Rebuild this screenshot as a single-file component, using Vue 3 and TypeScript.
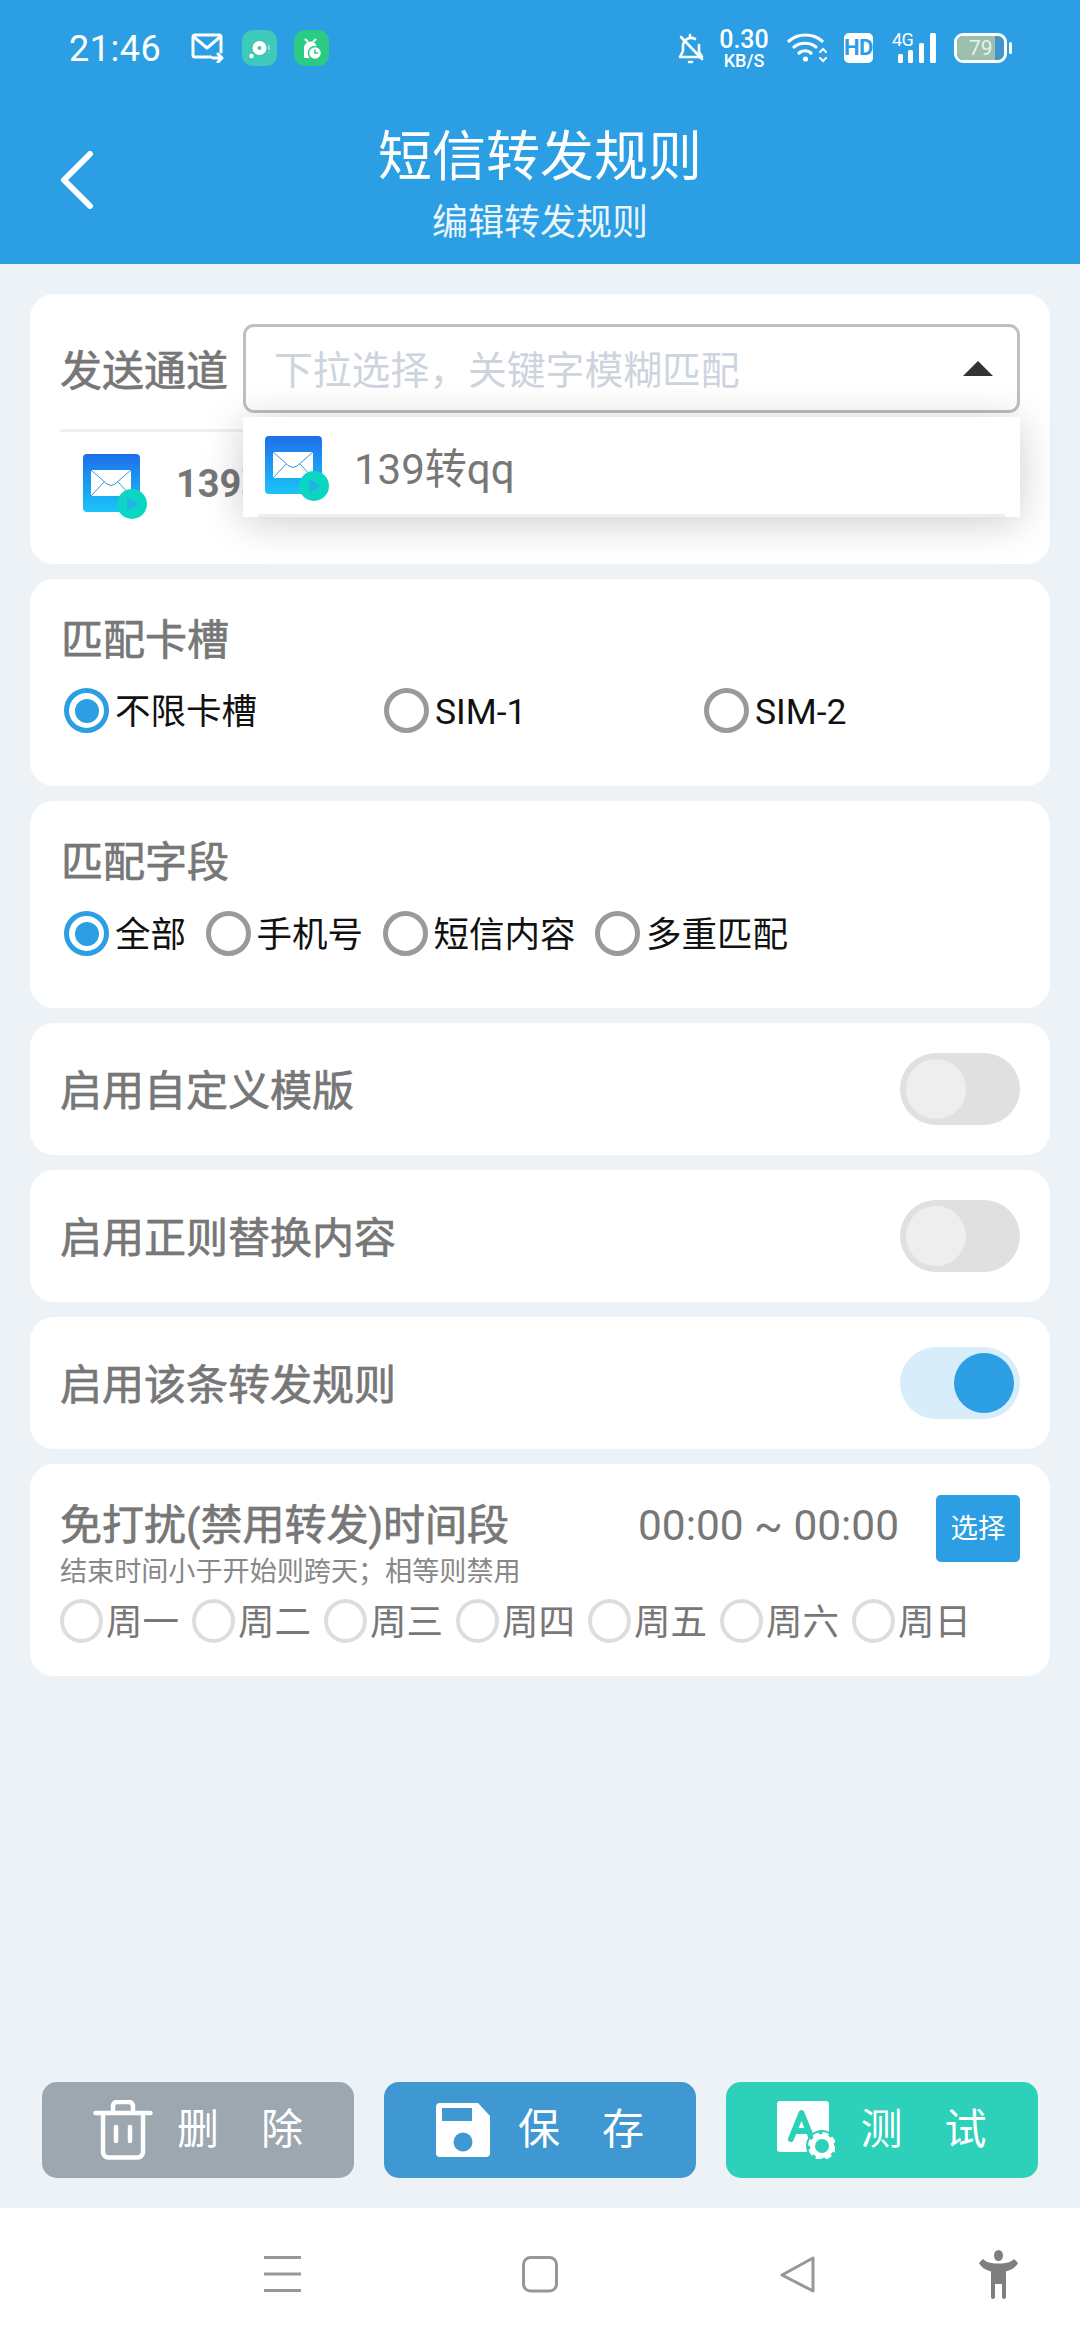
<script setup lang="ts">
const days: string[] = ['周一', '周二', '周三', '周四', '周五', '周六', '周日']
const sims: { label: string; on: boolean }[] = [
  { label: '不限卡槽', on: true },
  { label: 'SIM-1', on: false },
  { label: 'SIM-2', on: false },
]
const fields: { label: string; on: boolean }[] = [
  { label: '全部', on: true },
  { label: '手机号', on: false },
  { label: '短信内容', on: false },
  { label: '多重匹配', on: false },
]
</script>

<template>
  <div class="page">
    <header class="header">
      <div class="status">
        <div class="status-left">
          <span class="time">21:46</span>
          <svg class="ic-mail" width="34" height="30" viewBox="0 0 34 30" fill="none" stroke="#fff" stroke-width="3" stroke-linecap="round" stroke-linejoin="round">
            <path d="M30 19V4a2 2 0 0 0-2-2H4a2 2 0 0 0-2 2v18a2 2 0 0 0 2 2h16" />
            <path d="M3 4l13 11L29 4" />
            <path d="M22 25h9M27 21l4 4-4 4" />
          </svg>
          <span class="app-badge teal">
            <svg width="35" height="36" viewBox="0 0 35 36">
              <circle cx="17.500" cy="18" r="7" fill="#fff" />
              <circle cx="17.500" cy="18" r="2" fill="#3FC9B8" />
              <circle cx="9.500" cy="26" r="2.200" fill="#fff" />
              <path d="M27 15v5M27 22v1" stroke="#fff" stroke-width="1.200" opacity=".7" />
            </svg>
          </span>
          <span class="app-badge green">
            <svg width="35" height="36" viewBox="0 0 35 36">
              <path d="M11 9l3 3M22 9l-3 3" stroke="#fff" stroke-width="2" />
              <path d="M10 28V18a6.500 6.500 0 0 1 13 0v10z" fill="#fff" />
              <circle cx="21" cy="23" r="6.500" fill="#fff" stroke="#2BCB85" stroke-width="1.500" />
              <path d="M21 19.500V23h3" fill="none" stroke="#2BCB85" stroke-width="1.500" />
            </svg>
          </span>
        </div>
        <div class="status-right">
          <svg width="26" height="32" viewBox="0 0 26 32" fill="none" stroke="#fff" stroke-width="2.600" stroke-linejoin="round" stroke-linecap="round">
            <path d="M5 18V14a8 8 0 0 1 12-7M21 13v7l3 5H2l3-6" />
            <path d="M3 5l21 22" />
            <path d="M12 3v1M11 30h3" />
          </svg>
          <div class="speed"><span class="speed-num">0.30</span><span class="speed-unit">KB/S</span></div>
          <svg width="41" height="32" viewBox="0 0 41 32" fill="none" stroke="#fff" stroke-width="3.200" stroke-linecap="round">
            <path d="M2 9C11 1 26 1 35 9" />
            <path d="M7 15c6-5 16-5 22 0" />
            <path d="M12 21c3-3 9-3 12 0" />
            <circle cx="18.500" cy="27" r="2.600" fill="#fff" stroke="none" />
            <path d="M33 20l3-3 3 3M33 26l3 3 3-3" stroke-width="2" />
          </svg>
          <span class="hd">HD</span>
          <div class="sig">
            <span class="sig-4g">4G</span>
            <svg width="44" height="30" viewBox="0 0 44 30" fill="#fff">
              <rect x="6" y="21" width="5" height="9" rx="1.500" />
              <rect x="16" y="17" width="5" height="13" rx="1.500" />
              <rect x="27" y="10" width="5" height="20" rx="1.500" />
              <rect x="38" y="0" width="6" height="30" rx="1.500" />
            </svg>
          </div>
          <div class="battery">
            <div class="bat-body"><div class="bat-fill"></div><span class="bat-num">79</span></div>
            <span class="bat-tip"></span>
          </div>
        </div>
      </div>
      <div class="titlebar">
        <svg class="back" width="34" height="58" viewBox="0 0 34 58" fill="none" stroke="#fff" stroke-width="6" stroke-linecap="round" stroke-linejoin="round">
          <path d="M30 3L4 29l26 26" />
        </svg>
        <div class="titles">
          <div class="title">短信转发规则</div>
          <div class="subtitle">编辑转发规则</div>
        </div>
      </div>
    </header>

    <main class="content">
      <section class="card channel">
        <div class="channel-row">
          <span class="label">发送通道</span>
          <div class="select">
            <span class="placeholder">下拉选择，关键字模糊匹配</span>
            <span class="caret"></span>
          </div>
        </div>
        <div class="chosen">
          <svg class="mail-icon" width="64" height="66" viewBox="0 0 64 66">
            <defs>
              <linearGradient id="mg1" x1="0" y1="0" x2="0" y2="1">
                <stop offset="0" stop-color="#1E6FEA" />
                <stop offset="1" stop-color="#1CC4F8" />
              </linearGradient>
            </defs>
            <rect x="0" y="0" width="57" height="58" rx="4" fill="url(#mg1)" />
            <rect x="8" y="16" width="40" height="26" rx="1" fill="#fff" />
            <path d="M8 16l16 14q4 3 8 0l16-14M8 42l13-14M48 42L35 28" fill="none" stroke="#3596E0" stroke-width="1" />
            <circle cx="49" cy="50" r="15" fill="#0BD6C3" />
            <path d="M44 43l12 7-12 7z" fill="#1FB4E4" />
          </svg>
          <span class="chosen-name">139转qq</span>
        </div>
        <div class="dropdown">
          <div class="option">
            <svg class="mail-icon" width="64" height="66" viewBox="0 0 64 66">
              <rect x="0" y="0" width="57" height="58" rx="4" fill="url(#mg1)" />
              <rect x="8" y="16" width="40" height="26" rx="1" fill="#fff" />
              <path d="M8 16l16 14q4 3 8 0l16-14M8 42l13-14M48 42L35 28" fill="none" stroke="#3596E0" stroke-width="1" />
              <circle cx="49" cy="50" r="15" fill="#0BD6C3" />
              <path d="M44 43l12 7-12 7z" fill="#1FB4E4" />
            </svg>
            <span class="option-name">139转qq</span>
          </div>
        </div>
      </section>

      <section class="card group sim">
        <div class="label">匹配卡槽</div>
        <div class="sim-grid">
          <div v-for="s in sims" :key="s.label" class="radio">
            <span class="dot" :class="{ on: s.on }"></span><span class="radio-text">{{ s.label }}</span>
          </div>
        </div>
      </section>

      <section class="card group field">
        <div class="label">匹配字段</div>
        <div class="field-row">
          <div v-for="f in fields" :key="f.label" class="radio">
            <span class="dot" :class="{ on: f.on }"></span><span class="radio-text">{{ f.label }}</span>
          </div>
        </div>
      </section>

      <section class="card toggle-row">
        <span class="label">启用自定义模版</span>
        <span class="toggle"><span class="knob"></span></span>
      </section>
      <section class="card toggle-row">
        <span class="label">启用正则替换内容</span>
        <span class="toggle"><span class="knob"></span></span>
      </section>
      <section class="card toggle-row">
        <span class="label">启用该条转发规则</span>
        <span class="toggle on"><span class="knob"></span></span>
      </section>

      <section class="card dnd">
        <div class="dnd-top">
          <div class="dnd-text">
            <div class="dnd-title">免打扰(禁用转发)时间段</div>
            <div class="dnd-note">结束时间小于开始则跨天；相等则禁用</div>
          </div>
          <span class="dnd-time">00:00 ~ 00:00</span>
          <span class="pick">选择</span>
        </div>
        <div class="days">
          <div v-for="d in days" :key="d" class="day">
            <span class="day-dot"></span><span class="day-text">{{ d }}</span>
          </div>
        </div>
      </section>
    </main>

    <div class="actions">
      <button class="act gray">
        <svg width="60" height="60" viewBox="0 0 60 60" fill="none" stroke="#fff" stroke-width="4.500" stroke-linecap="round" stroke-linejoin="round">
          <path d="M2.500 13h55" />
          <path d="M20 12V6a4 4 0 0 1 4-4h12a4 4 0 0 1 4 4v6" />
          <path d="M10 13v39a5.500 5.500 0 0 0 5.500 5.500h29a5.500 5.500 0 0 0 5.500-5.500V13" />
          <path d="M23 27v14M37 27v14" />
        </svg>
        <span class="act-text gap-gray">删　除</span>
      </button>
      <button class="act blue">
        <svg width="54" height="54" viewBox="0 0 54 54">
          <path fill="#fff" fill-rule="evenodd" d="M4 0h38l12 13v37a4 4 0 0 1-4 4H4a4 4 0 0 1-4-4V4a4 4 0 0 1 4-4zM6 5v13h30V5zM27 29.500a9.500 9.500 0 1 0 0 19 9.500 9.500 0 0 0 0-19z" />
        </svg>
        <span class="act-text gap-blue">保　存</span>
      </button>
      <button class="act teal2">
        <svg width="58" height="58" viewBox="0 0 58 58">
          <rect x="0" y="0" width="52" height="51" rx="3" fill="#fff" />
          <path d="M14 38L24.500 12 35 38M18 30h13" fill="none" stroke="#2DD0B8" stroke-width="6" stroke-linecap="round" stroke-linejoin="round" />
          <circle cx="45" cy="45" r="16" fill="#2DD0B8" />
          <circle cx="45" cy="45" r="9.500" fill="none" stroke="#fff" stroke-width="5" />
          <circle cx="45" cy="45" r="12" fill="none" stroke="#fff" stroke-width="4" stroke-dasharray="6 3.420" />
        </svg>
        <span class="act-text gap-teal">测　试</span>
      </button>
    </div>

    <nav class="navbar">
      <svg class="nav-menu" width="38" height="38" viewBox="0 0 38 38" fill="#979797">
        <rect x="0" y="0" width="37" height="3" />
        <rect x="0" y="16.500" width="37" height="3" />
        <rect x="0" y="33" width="37" height="3" />
      </svg>
      <svg class="nav-home" width="36" height="38" viewBox="0 0 36 38" fill="none" stroke="#979797" stroke-width="3">
        <rect x="1.500" y="1.500" width="33" height="33.500" rx="7" />
      </svg>
      <svg class="nav-back" width="36" height="38" viewBox="0 0 36 38" fill="none" stroke="#979797" stroke-width="3" stroke-linejoin="round">
        <path d="M33 2v33L2 19z" />
      </svg>
      <svg class="nav-a11y" width="39" height="49" viewBox="0 0 39 49" fill="#7f7f7f">
        <ellipse cx="19.500" cy="5.500" rx="4.500" ry="5.500" />
        <path d="M0 13l4-4c3 3 7 4.500 15.500 4.500S32 12 35 9l4 4c-2 4-6 7-12 8.500V47a2 2 0 0 1-4 0V34h-7v13a2 2 0 0 1-4 0V21.500C6 20 2 17 0 13z" />
      </svg>
    </nav>
  </div>
</template>

<style>
html, body { margin: 0; padding: 0; background: #edf2f7; }
</style>

<style scoped>
* { box-sizing: border-box; }
.page {
  width: 1080px;
  height: 2340px;
  display: flex;
  flex-direction: column;
  background: #edf2f7;
  font-family: Roboto, "Noto Sans CJK SC", sans-serif;
  overflow: hidden;
}
.header {
  height: 264px;
  flex: none;
  background: #2c9ee3;
  color: #fff;
  display: flex;
  flex-direction: column;
}
.status {
  height: 96px;
  flex: none;
  padding: 30px 68px 0 69px;
  display: flex;
  justify-content: space-between;
  align-items: flex-start;
}
.status-left { display: flex; align-items: center; height: 36px; }
.time { font-size: 36px; width: 122px; letter-spacing: 0.5px; line-height: 40px; padding-top: 2px; }
.ic-mail { margin-right: 17px; }
.app-badge {
  width: 35px;
  height: 36px;
  border-radius: 11px;
  display: flex;
  align-items: center;
  justify-content: center;
  margin-right: 17px;
}
.teal { background: #3fc9b8; }
.green { background: #2bcb85; }
.status-right { display: flex; align-items: center; height: 36px; }
.speed { width: 50px; margin: 0 18px 0 15px; display: flex; flex-direction: column; align-items: center; font-weight: 500; }
.speed-num { font-size: 25px; height: 22px; line-height: 22px; }
.speed-unit { font-size: 18px; height: 15px; line-height: 15px; margin-top: 2px; }
.hd {
  width: 29px; height: 30px; margin: 0 19px 0 16px;
  background: #fff; color: #2c9ee3; border-radius: 5px;
  font-size: 22px; font-weight: 700; line-height: 30px; text-align: center;
  font-family: "Liberation Sans Narrow", Roboto, sans-serif; letter-spacing: -0.5px;
}
.sig { position: relative; width: 44px; height: 30px; margin-right: 18px; }
.sig svg { display: block; }
.sig-4g { position: absolute; left: 0; top: -1px; font-size: 18px; line-height: 16px; letter-spacing: -0.5px; }
.battery { display: flex; align-items: center; }
.bat-body {
  width: 53px; height: 30px; border: 3px solid #fff; border-radius: 9px;
  position: relative; overflow: hidden; background: #4095cd;
}
.bat-fill { position: absolute; left: 0; top: 0; bottom: 0; width: 38px; background: #9dbfae; }
.bat-num { position: absolute; left: 12px; top: 0; font-size: 21px; line-height: 24px; color: #e9f3ee; }
.bat-tip { width: 3px; height: 12px; background: #fff; margin-left: 2px; border-radius: 2px; }

.titlebar { flex: 1; position: relative; display: flex; justify-content: center; }
.back { position: absolute; left: 60px; top: 55px; }
.titles { text-align: center; }
.title { font-size: 54px; line-height: 80px; margin-top: 22px; }
.subtitle { font-size: 36px; line-height: 50px; color: #eaf5fc; margin-top: 0; }

.content {
  flex: 1;
  padding: 30px 30px 0;
  display: flex;
  flex-direction: column;
  gap: 15px;
}
.card { background: #fff; border-radius: 24px; flex: none; }
.label { font-size: 42px; color: #777; line-height: 60px; -webkit-text-stroke: 0.7px #777; }

.channel { height: 270px; position: relative; padding: 30px 30px 0; }
.channel-row { display: flex; align-items: center; height: 89px; }
.channel-row .label { width: 183px; flex: none; margin-top: 6px; }
.select {
  flex: 1;
  height: 89px;
  border: 3px solid #bbbfc6;
  border-radius: 11px;
  display: flex;
  align-items: center;
  justify-content: space-between;
  padding: 0 24px 0 28px;
}
.placeholder { font-size: 38.800px; color: #cdd4de; line-height: 83px; padding-top: 3px; }
.caret {
  width: 0; height: 0;
  border-left: 15px solid transparent;
  border-right: 15px solid transparent;
  border-bottom: 15px solid #333;
}
.chosen {
  margin-top: 16px;
  border-top: 3px solid #f0f0f0;
  padding: 22px 0 0 23px;
  display: flex;
  align-items: flex-start;
}
.chosen-name { font-size: 38px; font-weight: 700; color: #777; margin-left: 29px; line-height: 40px; margin-top: 10px; white-space: nowrap; }
.dropdown {
  position: absolute;
  left: 213px;
  top: 123px;
  width: 777px;
  height: 100px;
  background: #fff;
  box-shadow: 0 5px 40px rgba(0, 0, 0, 0.2);
  padding: 0 15px;
}
.option {
  height: 100px;
  border-bottom: 3px solid #eeeeee;
  display: flex;
  align-items: flex-start;
  padding: 19px 0 0 7px;
}
.option-name { font-size: 42px; color: #777; margin-left: 25px; line-height: 60px; margin-top: 4px; }

.group { height: 207px; padding: 32px 31px 0; }
.sim-grid { display: grid; grid-template-columns: repeat(3, 320px); margin-top: 17px; padding-left: 3px; }
.field-row { display: flex; gap: 19.500px; margin-top: 18px; padding-left: 3px; }
.radio { display: flex; align-items: center; height: 45px; }
.dot {
  width: 45px; height: 45px; border-radius: 50%;
  border: 5px solid #9a9a9a; flex: none; margin-right: 6px; position: relative;
}
.dot.on { border-color: #2c9ee3; }
.dot.on::after {
  content: ""; position: absolute; left: 5.500px; top: 5.500px; width: 24px; height: 24px;
  border-radius: 50%; background: #2c9ee3;
}
.radio-text { font-size: 35.500px; color: #111; line-height: 45px; white-space: nowrap; margin-top: 3px; }

.toggle-row {
  height: 132px;
  padding: 0 30px;
  display: flex;
  align-items: center;
  justify-content: space-between;
}
.toggle-row .label { padding-top: 5px; }
.toggle {
  width: 120px; height: 72px; border-radius: 36px; background: #e0e0e0; position: relative;
  display: block;
}
.knob {
  position: absolute; left: 6px; top: 6px; width: 60px; height: 60px; border-radius: 50%; background: #eeeeee;
}
.toggle.on { background: #d8edfa; }
.toggle.on .knob { left: auto; right: 6px; background: #2c9ee3; }

.dnd { height: 212px; padding: 31px 30px 0; display: flex; flex-direction: column; }
.dnd-top { display: flex; align-items: flex-start; height: 104px; }
.dnd-text { width: 580px; padding-top: 6px; }
.dnd-title { font-size: 42px; line-height: 50px; color: #777; -webkit-text-stroke: 0.7px #777; white-space: nowrap; }
.dnd-note { font-size: 27.100px; line-height: 32px; color: #888; white-space: nowrap; margin-top: 5px; }
.dnd-time { font-size: 42.400px; color: #777; line-height: 50px; width: 296px; white-space: nowrap; padding-top: 6px; margin-left: -2px; margin-right: 2px; }
.pick {
  width: 84px; height: 67px; background: #2c9ee3; color: #fff; border-radius: 5px;
  font-size: 27.500px; line-height: 67px; text-align: center; flex: none;
}
.days { display: flex; }
.day { width: 132px; display: flex; align-items: center; height: 44px; flex: none; }
.day-dot { width: 43px; height: 44px; border-radius: 50%; border: 4px solid #ddd; flex: none; margin-right: 3px; }
.day-text { font-size: 36.500px; color: #777; line-height: 44px; white-space: nowrap; margin-top: 3px; }

.actions {
  flex: none;
  height: 126px;
  padding: 0 42px;
  display: flex;
  gap: 30px;
}
.act {
  width: 312px; height: 96px; border: 0; border-radius: 15px; color: #fff;
  display: flex; align-items: center; justify-content: center; padding: 0;
  font-family: inherit;
}
.gray { background: #9da7b0; }
.blue { background: #4098d2; }
.teal2 { background: #2dd0b8; }
.act-text { font-size: 42px; white-space: pre; line-height: 60px; }
.gap-gray { margin-left: 24px; }
.gap-blue { margin-left: 28px; }
.gap-teal { margin-left: 25px; }

.navbar { flex: none; height: 132px; background: #fff; position: relative; }
.nav-menu { position: absolute; left: 264px; top: 48px; }
.nav-home { position: absolute; left: 522px; top: 48px; }
.nav-back { position: absolute; left: 780px; top: 48px; }
.nav-a11y { position: absolute; left: 979px; top: 42px; }
</style>
